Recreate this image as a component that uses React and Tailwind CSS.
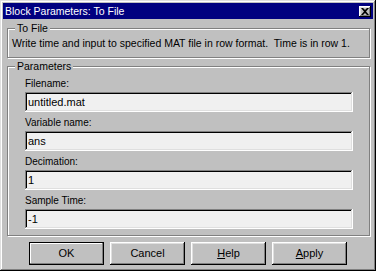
import React from 'react';

const raised =
  'shadow-[inset_-1px_-1px_#000,inset_1px_1px_#fff,inset_-2px_-2px_#808080,inset_2px_2px_#dfdfdf]';
const sunken =
  'shadow-[inset_-1px_-1px_#fff,inset_1px_1px_#808080,inset_-2px_-2px_#dfdfdf,inset_2px_2px_#000]';

const GroupBox = ({ title, className = '', children }) => (
  <div className={`relative border border-[#808080] shadow-[1px_1px_0_#fff,inset_1px_1px_0_#fff] ${className}`}>
    <span className="absolute left-[7px] -top-[7px] px-[2px] bg-[#c0c0c0] text-[10.5px] leading-[12px]">{title}</span>
    {children}
  </div>
);

const Field = ({ label, value }) => (
  <div className="flex flex-col">
    <label className="text-[10px] leading-[12px] mb-[2px]">{label}</label>
    <div className={`h-[20px] w-[328px] bg-[#f0f0f0] ${sunken} flex items-center pl-[3px] text-[11px]`}>{value}</div>
  </div>
);

const Button = ({ children, primary }) => (
  <button
    className={`w-[75px] h-[23px] bg-[#c0c0c0] text-[11px] flex items-center justify-center ${
      primary
        ? 'border border-black shadow-[inset_-1px_-1px_#808080,inset_1px_1px_#fff]'
        : raised
    }`}
  >
    {children}
  </button>
);

export default function App() {
  return (
    <div className="w-[376px] h-[271px] bg-[#c0c0c0] p-[3px] flex flex-col font-['Liberation_Sans',Arial,sans-serif] text-black shadow-[inset_-1px_-1px_#000,inset_1px_1px_#dfdfdf,inset_-2px_-2px_#808080,inset_2px_2px_#fff]">
      <div className="h-[16px] bg-[#000080] flex items-center justify-between pl-[2px] pr-[2px]">
        <span className="text-white text-[10.5px] leading-none">Block Parameters: To File</span>
        <div className={`w-[12px] h-[11px] bg-[#c0c0c0] ${raised} flex items-center justify-center`}>
          <svg width="8" height="7" viewBox="0 0 8 7">
            <path d="M0 0h2l2 2 2-2h2L5 3.5 8 7H6L4 5 2 7H0l3-3.5z" fill="#000" />
          </svg>
        </div>
      </div>

      <GroupBox title="To File" className="ml-[4px] mt-[9px] w-[363px] h-[30px] pt-[8px] pl-[4px]">
        <p className="text-[10.5px] leading-[13px] whitespace-pre">
          Write time and input to specified MAT file in row format.  Time is in row 1.
        </p>
      </GroupBox>

      <GroupBox title="Parameters" className="ml-[4px] mt-[8px] w-[363px] pt-[11px] pl-[17px] pb-[6px]">
        <div className="flex flex-col gap-[5px]">
          <Field label="Filename:" value="untitled.mat" />
          <Field label="Variable name:" value="ans" />
          <Field label="Decimation:" value="1" />
          <Field label="Sample Time:" value="-1" />
        </div>
      </GroupBox>

      <div className="flex gap-[6px] pl-[26px] mt-[6px]">
        <Button primary>OK</Button>
        <Button>Cancel</Button>
        <Button>
          <span><span className="underline">H</span>elp</span>
        </Button>
        <Button>
          <span><span className="underline">A</span>pply</span>
        </Button>
      </div>
    </div>
  );
}
